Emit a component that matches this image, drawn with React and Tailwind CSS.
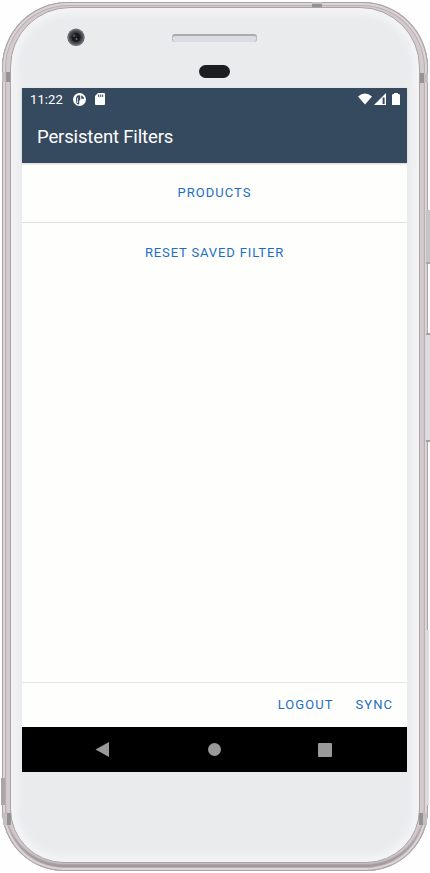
function StatusBar() {
  return (
    <div className="flex h-[22px] items-center pl-2 pr-[7px] text-white">
      <span className="w-[43px] font-['Roboto',sans-serif] text-[13px] leading-none tracking-[0.1px]">11:22</span>
      <svg className="h-[13px] w-[13px]" viewBox="0 0 13 13">
        <circle cx="6.5" cy="6.5" r="6.5" fill="#fff" />
        <path d="M4 11Q3 9 3 6Q3 2.2 6 2.2H7.2V7.4H6.2V11.4Z" fill="#364a5f" />
        <path d="M8.2 2.8H9.8V4.2H11V5.8H8.2Z" fill="#364a5f" />
        <path d="M4.6 4.6V10" stroke="#fff" strokeWidth="0.8" />
      </svg>
      <svg className="ml-[9px] h-3 w-[10px]" viewBox="0 0 10 12">
        <path d="M3 0H9Q10 0 10 1V11Q10 12 9 12H1Q0 12 0 11V3Z" fill="#fff" />
        <path d="M3.7 1.5V4M5.7 1.5V4M7.7 1.5V4" stroke="#364a5f" strokeWidth="1" />
      </svg>
      <svg className="ml-auto h-3 w-[14px]" viewBox="0 0 15 12">
        <path d="M0 3.2Q7.5-3 15 3.2L7.5 12Z" fill="#fff" />
      </svg>
      <svg className="ml-[2px] h-3 w-3" viewBox="0 0 12 12">
        <path d="M0 12L12 0V12Z" fill="#fff" />
        <path d="M8.6 4.5H10.6V11H8.6Z" fill="#364a5f" />
      </svg>
      <svg className="ml-[6px] h-3 w-2" viewBox="0 0 8 12">
        <path d="M2 0H6V1H7Q8 1.3 8 2.3V12H0V2.3Q0 1.3 1 1H2Z" fill="#fff" />
      </svg>
    </div>
  );
}

function TextButton({ children, className }) {
  return (
    <button className={"whitespace-nowrap font-['Roboto',sans-serif] text-[13px] leading-none text-[#1b6fc1] " + className}>
      {children}
    </button>
  );
}

function Screen() {
  return (
    <main className="mr-px flex h-[684px] w-[385px] flex-col bg-[#fefefd]">
      <header className="h-[75px] shrink-0 bg-[#364a5f] shadow-[0_1px_2px_#0000002e]">
        <StatusBar />
        <h1 className="pl-[15px] pt-[17px] font-['Roboto',sans-serif] text-[18.5px] leading-5 tracking-[-0.15px] text-white">
          Persistent Filters
        </h1>
      </header>
      <section className="flex h-[60px] items-center justify-center border-b border-[#e1e1e3]">
        <TextButton className="tracking-[1.05px]">PRODUCTS</TextButton>
      </section>
      <section className="flex h-[58px] items-center justify-center">
        <TextButton className="tracking-[0.86px]">RESET SAVED FILTER</TextButton>
      </section>
      <footer className="mt-auto flex h-[45px] items-center justify-end gap-[22px] border-t border-[#e5e6e9] pb-[2px] pr-[14px]">
        <TextButton className="tracking-[1.05px]">LOGOUT</TextButton>
        <TextButton className="tracking-[1.05px]">SYNC</TextButton>
      </footer>
      <nav className="flex h-[45px] shrink-0 items-center bg-black pl-[73px]">
        <svg className="h-[15px] w-[14px]" viewBox="0 0 14 15"><path d="M0.5 7.5L14 0V15Z" fill="#999" /></svg>
        <div className="ml-[99px] h-[13px] w-[13px] rounded-full bg-[#999]" />
        <div className="ml-[97px] h-[14px] w-[14px] rounded-[1px] bg-[#999]" />
      </nav>
    </main>
  );
}

export default function App() {
  return (
    <div className="relative h-[873px] w-[430px] overflow-hidden bg-[#fefefe]">
      <div className="absolute left-[426px] top-[210px] h-[54px] w-1 border-b-2 border-[#aaa9aa] bg-[#c5c5c6]" />
      <div className="absolute left-[426px] top-[333px] h-[109px] w-1 border-y-2 border-[#a3a2a4] bg-[#dddcdf]" />
      <div className="absolute left-[1px] top-[778px] h-[27px] w-1 bg-[#aaa5a8]" />
      <div className="absolute left-[426px] top-[630px] h-[175px] w-[3px] bg-[#dedbdd]" />
      <div className="flex h-[873px] pl-[2px] pt-[2px]">
        <div className="h-[869px] w-[426px] rounded-[66px_66px_62px_62px] bg-[#d3cacd] px-[8px] pb-[8px] pt-[5px] shadow-[inset_0_0_0_1px_#aaa3a5,inset_0_0_0_3px_#dcd4d7,inset_0_0_0_4px_#b9b1b4,inset_0_-4px_2px_3px_#9f999c]">
          <div className="flex h-full w-full flex-col items-center rounded-[60px_60px_54px_54px] border border-[#aaa3a6] bg-[#e9ebed] pt-[80px] shadow-[inset_0_0_7px_6px_#f4f4f7]">
            <Screen />
          </div>
        </div>
      </div>
      <div className="absolute left-[2px] top-[72px] h-[10px] w-2 bg-[linear-gradient(90deg,#c4bfc1_50%,#969193_50%)]" />
      <div className="absolute left-[420px] top-[73px] h-[10px] w-2 bg-[linear-gradient(90deg,#969193_50%,#c4bfc1_50%)]" />
      <div className="absolute left-[312px] top-[2px] h-[5px] w-[10px] bg-[linear-gradient(#c4bfc1_30%,#969193_50%)]" />
      <div className="absolute left-[3px] top-[813px] h-3 w-2 bg-[linear-gradient(90deg,#c4bfc1_50%,#969193_50%)]" />
      <div className="absolute left-[419px] top-[813px] h-3 w-2 bg-[linear-gradient(90deg,#969193_50%,#c4bfc1_50%)]" />
      <svg className="absolute left-[67px] top-[28px]" width="18" height="18" viewBox="0 0 18 18">
        <circle cx="9" cy="9.3" r="8.7" fill="#6d7074" />
        <circle cx="9" cy="9.3" r="7" fill="#44474c" />
        <circle cx="9" cy="9.3" r="4.8" fill="#181a20" />
        <circle cx="7" cy="7.5" r="1.5" fill="#454b58" />
        <circle cx="9.5" cy="11" r="1" fill="#74705c" />
      </svg>
      <div className="absolute left-[172px] top-[34px] h-2 w-[85px] rounded-[3px] border-t-2 border-[#a9abae] bg-[#dadde1] shadow-[inset_1px_0_#b9bbbe,inset_-1px_0_#b9bbbe]" />
      <div className="absolute left-[199px] top-[65px] h-[13px] w-[31px] rounded-full bg-[#1c1d21]" />
    </div>
  );
}
